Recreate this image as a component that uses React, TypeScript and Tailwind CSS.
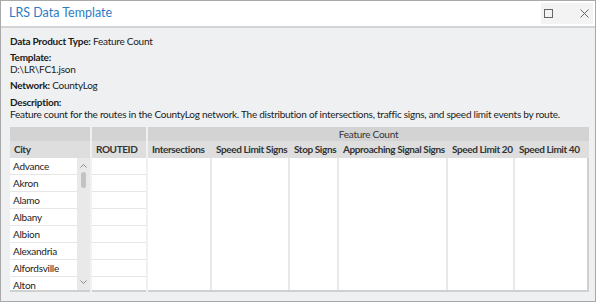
import React from "react";

const cities = ["Advance", "Akron", "Alamo", "Albany", "Albion", "Alexandria", "Alfordsville", "Alton"];
const cols: [string, string][] = [
  ["Intersections", "w-[64px]"],
  ["Speed Limit Signs", "w-[78px]"],
  ["Stop Signs", "w-[49px]"],
  ["Approaching Signal Signs", "w-[109px]"],
  ["Speed Limit 20", "w-[67px]"],
  ["Speed Limit 40", "w-[72px]"],
];

export default function App() {
  return (
    <div
      className="w-[596px] h-[302px] overflow-hidden bg-[#eff0f1] border border-[#a9a9a9] text-[#1b1b1b] flex flex-col"
      style={{ fontFamily: 'Lato, "Noto Sans", sans-serif' }}
    >
      {/* Title bar */}
      <div className="h-[27px] shrink-0 bg-white border-b-2 border-[#d4d4d4] flex items-center pl-[8px] pr-[2px]">
        <div className="text-[12.5px] text-[#2b7cc4] leading-none flex-1">LRS Data Template</div>
        <div className="flex items-center h-[21px] w-[52px] bg-[#f3f3f3] pl-[3px]">
          <div className="w-[9px] h-[9px] border border-[#666]" />
          <div className="w-[27px]" />
          <svg width="9" height="9" viewBox="0 0 9 9">
            <path d="M0.5 0.5L8.5 8.5M8.5 0.5L0.5 8.5" stroke="#666" strokeWidth="1" />
          </svg>
        </div>
      </div>

      {/* Info */}
      <div className="px-[9px] pt-[7px] text-[10px] leading-[12px] flex flex-col tracking-[-0.25px]">
        <div>
          <span className="font-bold">Data Product Type:</span> Feature Count
        </div>
        <div className="mt-[4px] font-bold">Template:</div>
        <div>D:\LR\FC1.json</div>
        <div className="mt-[4px]">
          <span className="font-bold">Network:</span> CountyLog
        </div>
        <div className="mt-[5px] font-bold">Description:</div>
        <div className="whitespace-nowrap">
          Feature count for the routes in the CountyLog network. The distribution of intersections, traffic signs, and speed limit events by route.
        </div>
      </div>

      {/* Grid */}
      <div className="ml-[9px] mt-[7px] w-[579px] flex gap-[2px] text-[10px] font-bold text-[#333] tracking-[-0.4px]">
        {/* City pane */}
        <div className="w-[80px] flex flex-col">
          <div className="h-[14px] bg-[#d3d3d3]" />
          <div className="h-[17px] bg-[#dedede] flex items-center pl-[4px]">City</div>
          <div className="h-[134px] flex overflow-hidden border-b-2 border-[#d0d0d0]">
            <div className="w-[67px] flex flex-col font-normal text-[#222] tracking-[-0.25px]">
              {cities.map((c) => (
                <div key={c} className="h-[17px] shrink-0 bg-white border-b border-[#e6e6e6] flex items-center pl-[3px]">
                  {c}
                </div>
              ))}
            </div>
            <div className="w-[13px] bg-[#e9e9e9] flex flex-col items-center">
              <svg className="mt-[6px]" width="7" height="4" viewBox="0 0 7 4">
                <path d="M0.5 3.5L3.5 0.5L6.5 3.5" fill="none" stroke="#888" strokeWidth="1" />
              </svg>
              <div className="w-[5px] h-[16px] mt-[4px] rounded-full bg-[#c3c3c3]" />
              <div className="flex-1" />
              <svg className="mb-[6px]" width="7" height="4" viewBox="0 0 7 4">
                <path d="M0.5 0.5L3.5 3.5L6.5 0.5" fill="none" stroke="#888" strokeWidth="1" />
              </svg>
            </div>
          </div>
        </div>

        {/* ROUTEID pane */}
        <div className="w-[54px] flex flex-col">
          <div className="h-[14px] bg-[#d3d3d3]" />
          <div className="h-[17px] bg-[#dedede] flex items-center pl-[4px]">ROUTEID</div>
          <div className="h-[134px] flex flex-col overflow-hidden border-b-2 border-[#d0d0d0]">
            {cities.map((c) => (
              <div key={c} className="h-[17px] shrink-0 bg-white border-b border-[#e6e6e6]" />
            ))}
          </div>
        </div>

        {/* Feature count pane */}
        <div className="flex-1 flex flex-col">
          <div className="h-[14px] bg-[#d3d3d3] font-normal text-[#333] tracking-[-0.25px] flex items-center justify-center leading-none">
            Feature Count
          </div>
          <div className="h-[17px] bg-[#dedede] flex">
            {cols.map(([n, w]) => (
              <div key={n} className={`${w} shrink-0 flex items-center pl-[4px] whitespace-nowrap`}>
                {n}
              </div>
            ))}
          </div>
          <div className="h-[134px] flex bg-white border-b-2 border-r-2 border-[#d0d0d0]">
            {cols.map(([n, w]) => (
              <div key={n} className={`${w} shrink-0 border-r-2 border-[#e8e8e8] last:border-r-0`} />
            ))}
          </div>
        </div>
      </div>
    </div>
  );
}
